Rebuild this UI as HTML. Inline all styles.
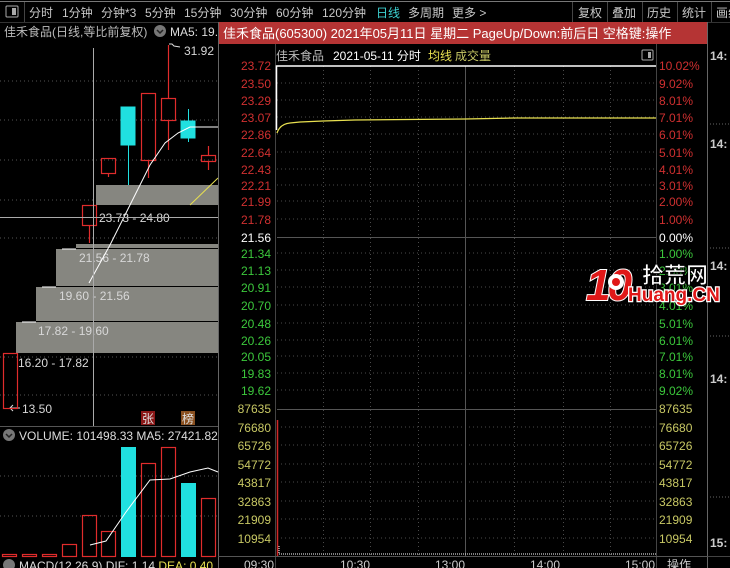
<!DOCTYPE html>
<html><head><meta charset="utf-8"><style>
html,body{margin:0;padding:0;background:#000;width:730px;height:568px;overflow:hidden}
svg{display:block}
text{font-family:"Liberation Sans","Noto Sans CJK SC",sans-serif;font-size:12px}
</style></head><body>
<svg width="730" height="568" viewBox="0 0 730 568" xmlns="http://www.w3.org/2000/svg">
<rect width="730" height="568" fill="#000"/>
<line x1="0" y1="1.5" x2="730" y2="1.5" stroke="#777"/>
<line x1="0" y1="22.5" x2="730" y2="22.5" stroke="#333"/>
<rect x="6" y="6" width="12" height="11" fill="none" stroke="#aaa" rx="1"/>
<rect x="12" y="8" width="4" height="7" fill="#aaa"/>
<line x1="24.5" y1="2" x2="24.5" y2="22" stroke="#444"/>
<g fill="#c8c8c8">
<text x="29" y="17">分时</text><text x="62" y="17">1分钟</text><text x="101" y="17">分钟*3</text>
<text x="145" y="17">5分钟</text><text x="184" y="17">15分钟</text><text x="230" y="17">30分钟</text>
<text x="276" y="17">60分钟</text><text x="322" y="17">120分钟</text>
<text x="376" y="17" fill="#3cd0d0">日线</text><text x="408" y="17">多周期</text><text x="452" y="17">更多 &gt;</text>
<text x="578" y="17">复权</text><text x="612" y="17">叠加</text><text x="647" y="17">历史</text><text x="682" y="17">统计</text><text x="716" y="17">画线</text>
</g>
<g stroke="#444"><line x1="572.5" y1="2" x2="572.5" y2="22"/><line x1="607.5" y1="2" x2="607.5" y2="22"/><line x1="642.5" y1="2" x2="642.5" y2="22"/><line x1="677.5" y1="2" x2="677.5" y2="22"/><line x1="711.5" y1="2" x2="711.5" y2="22"/></g>

<text x="4" y="36" fill="#bbb">佳禾食品(日线,等比前复权)</text>
<circle cx="160" cy="31" r="6" fill="#777"/><path d="M157 30l3 3 3-3" stroke="#222" stroke-width="1.5" fill="none"/>
<text x="170" y="36" fill="#ddd">MA5: 19.7</text>
<g stroke="#555" stroke-dasharray="1,3">
<line x1="0" y1="81" x2="218" y2="81"/><line x1="0" y1="120" x2="218" y2="120"/><line x1="0" y1="160" x2="218" y2="160"/>
<line x1="0" y1="200" x2="218" y2="200"/><line x1="0" y1="238" x2="218" y2="238"/><line x1="0" y1="357" x2="218" y2="357"/><line x1="0" y1="395" x2="218" y2="395"/>
<line x1="0" y1="476" x2="218" y2="476"/><line x1="0" y1="516" x2="218" y2="516"/>
</g>
<g fill="#868680">
<rect x="96" y="185" width="122" height="20"/>
<rect x="76" y="244" width="142" height="4"/>
<rect x="56" y="249" width="162" height="37"/>
<rect x="36" y="287" width="182" height="34"/>
<rect x="16" y="322" width="202" height="31"/>
</g>
<g stroke="#fff"><line x1="62" y1="249" x2="76" y2="249"/><line x1="42" y1="287" x2="56" y2="287"/><line x1="22" y1="322" x2="36" y2="322"/></g>
<line x1="190" y1="205" x2="218" y2="178" stroke="#e8e050"/>
<g fill="#d8d8d8">
<text x="99" y="222">23.73 - 24.80</text>
<text x="79" y="262">21.56 - 21.78</text>
<text x="59" y="300">19.60 - 21.56</text>
<text x="38" y="335">17.82 - 19.60</text>
<text x="18" y="367">16.20 - 17.82</text>
<text x="22" y="413">13.50</text>
<text x="184" y="55">31.92</text>
</g>
<path d="M10 408h10M13 405l-3 3 3 3" stroke="#ddd" fill="none"/>
<path d="M169 44l3 0 2 2 6 1" stroke="#ddd" fill="none"/>
<g fill="none" stroke="#e02c2c" stroke-width="1.2">
<rect x="3.5" y="353.5" width="14" height="55"/>
<rect x="82.5" y="205.5" width="14" height="20"/><line x1="89.5" y1="226" x2="89.5" y2="243"/>
<rect x="101.5" y="158.5" width="14" height="15"/><line x1="108.5" y1="174" x2="108.5" y2="177"/>
<rect x="141.5" y="93.5" width="14" height="67"/><line x1="148.5" y1="161" x2="148.5" y2="178"/>
<rect x="161.5" y="98.5" width="14" height="22"/><line x1="168.5" y1="45" x2="168.5" y2="98"/><line x1="168.5" y1="121" x2="168.5" y2="150"/>
<rect x="201.5" y="155.5" width="14" height="6"/><line x1="208.5" y1="146" x2="208.5" y2="155"/><line x1="208.5" y1="162" x2="208.5" y2="170"/>
</g>
<g fill="#20e0e0" stroke="#20e0e0">
<rect x="121" y="107" width="14" height="38"/><line x1="128.5" y1="145" x2="128.5" y2="185"/>
<rect x="181" y="121" width="14" height="17"/><line x1="188.5" y1="109" x2="188.5" y2="142"/>
</g>
<polyline points="89,283 110,245 130,205 150,165 165,143 178,133 190,127 218,127" fill="none" stroke="#fff"/>
<line x1="93.5" y1="48" x2="93.5" y2="427" stroke="#aaa"/>
<line x1="0" y1="217.5" x2="218" y2="217.5" stroke="#aaa"/>
<rect x="141" y="411" width="14" height="14" fill="#8a1818"/><text x="142" y="423" fill="#ddd">张</text>
<rect x="181" y="411" width="14" height="14" fill="#8a5020"/><text x="182" y="423" fill="#ddd">榜</text>
<line x1="0" y1="426.5" x2="218" y2="426.5" stroke="#555"/>
<circle cx="9" cy="435" r="6" fill="#777"/><path d="M6 434l3 3 3-3" stroke="#222" stroke-width="1.5" fill="none"/>
<text x="19" y="440" fill="#ddd">VOLUME: 101498.33  MA5: 27421.82</text>
<g fill="none" stroke="#e02c2c" stroke-width="1.2">
<rect x="2.5" y="554.5" width="14" height="2"/><rect x="22.5" y="554.5" width="14" height="2"/><rect x="42.5" y="554.5" width="14" height="2"/>
<rect x="62.5" y="544.5" width="14" height="12"/><rect x="82.5" y="515.5" width="14" height="41"/><rect x="101.5" y="531.5" width="14" height="25"/>
<rect x="141.5" y="463.5" width="14" height="93"/><rect x="161.5" y="447.5" width="14" height="109"/><rect x="201.5" y="498.5" width="14" height="58"/>
</g>
<rect x="121" y="447" width="15" height="110" fill="#20e0e0"/><rect x="181" y="483" width="15" height="74" fill="#20e0e0"/>
<polyline points="90,545 106,541 126,512 150,480 170,479 190,472 208,468 218,472" fill="none" stroke="#fff"/>
<circle cx="9" cy="565" r="6" fill="#777"/>
<text x="19" y="570" fill="#ddd">MACD(12,26,9)  DIF: 1.14  <tspan fill="#e8e050">DEA: 0.40</tspan></text>

<rect x="708" y="23" width="22" height="545" fill="#000"/>
<g fill="#ccc"><text x="710" y="60" style="font-weight:bold">14:</text><text x="710" y="148" style="font-weight:bold">14:</text><text x="710" y="270" style="font-weight:bold">14:</text><text x="710" y="383" style="font-weight:bold">14:</text><text x="710" y="547" style="font-weight:bold">15:</text></g>
<g stroke="#666" stroke-dasharray="1,2"><line x1="710" y1="124" x2="730" y2="124"/><line x1="710" y1="248" x2="730" y2="248"/><line x1="710" y1="336" x2="730" y2="336"/><line x1="710" y1="497" x2="730" y2="497"/></g>
<line x1="708" y1="556.5" x2="730" y2="556.5" stroke="#444"/>

<rect x="218" y="22" width="490" height="546" fill="#000"/>
<line x1="218.5" y1="22" x2="218.5" y2="568" stroke="#666"/>
<line x1="707.5" y1="22" x2="707.5" y2="568" stroke="#666"/>
<rect x="219" y="22" width="488" height="22" fill="#b53434"/>
<text x="223" y="38" fill="#fff" style="font-size:13px">佳禾食品(605300) 2021年05月11日 星期二 PageUp/Down:前后日 空格键:操作</text>
<text x="276" y="60" fill="#bbb">佳禾食品</text><text x="333" y="60" fill="#fff">2021-05-11 分时</text>
<text x="428" y="60" fill="#e8e050">均线</text><text x="455" y="60" fill="#c8c864">成交量</text>
<rect x="642" y="50" width="11" height="10" fill="none" stroke="#aaa" rx="1"/><rect x="648" y="52" width="3" height="6" fill="#aaa"/>
<line x1="656.5" y1="44" x2="656.5" y2="568" stroke="#444"/>
<g stroke="#4a4a4a" stroke-dasharray="1,3">
<line x1="277" y1="83" x2="656" y2="83"/><line x1="277" y1="100" x2="656" y2="100"/><line x1="277" y1="117" x2="656" y2="117"/><line x1="277" y1="134" x2="656" y2="134"/>
<line x1="277" y1="152" x2="656" y2="152"/><line x1="277" y1="169" x2="656" y2="169"/><line x1="277" y1="185" x2="656" y2="185"/><line x1="277" y1="201" x2="656" y2="201"/>
<line x1="277" y1="219" x2="656" y2="219"/><line x1="277" y1="253" x2="656" y2="253"/><line x1="277" y1="270" x2="656" y2="270"/>
<line x1="277" y1="287" x2="656" y2="287"/><line x1="277" y1="305" x2="656" y2="305"/><line x1="277" y1="323" x2="656" y2="323"/><line x1="277" y1="340" x2="656" y2="340"/>
<line x1="277" y1="356" x2="656" y2="356"/><line x1="277" y1="373" x2="656" y2="373"/><line x1="277" y1="390" x2="656" y2="390"/>
<line x1="277" y1="427" x2="656" y2="427"/><line x1="277" y1="445" x2="656" y2="445"/><line x1="277" y1="464" x2="656" y2="464"/><line x1="277" y1="482" x2="656" y2="482"/>
<line x1="277" y1="501" x2="656" y2="501"/><line x1="277" y1="519" x2="656" y2="519"/><line x1="277" y1="538" x2="656" y2="538"/>
<line x1="323.5" y1="66" x2="323.5" y2="556"/><line x1="370.5" y1="66" x2="370.5" y2="556"/><line x1="418.5" y1="66" x2="418.5" y2="556"/>
<line x1="514.5" y1="66" x2="514.5" y2="556"/><line x1="563.5" y1="66" x2="563.5" y2="556"/><line x1="610.5" y1="66" x2="610.5" y2="556"/>
</g>
<line x1="465.5" y1="66" x2="465.5" y2="556" stroke="#555"/>
<line x1="277" y1="237.5" x2="656" y2="237.5" stroke="#555"/>
<line x1="277" y1="409.5" x2="656" y2="409.5" stroke="#555"/>
<line x1="275.5" y1="44" x2="275.5" y2="568" stroke="#444"/>
<line x1="218" y1="556.5" x2="708" y2="556.5" stroke="#555"/>
<path d="M276.5 130V66H656" stroke="#fff" fill="none" stroke-width="1.5"/>
<path d="M277 133Q280 124 290 123L300 122L323 121L355 120L465 119L514 118L656 118" stroke="#e8e050" fill="none" stroke-width="1.3"/>
<line x1="277.5" y1="420" x2="277.5" y2="556" stroke="#d02828" stroke-width="1.5"/>
<path d="M279 546v8h377" stroke="#fff" stroke-dasharray="1,1" fill="none"/>
<g text-anchor="end">
<g fill="#d03030">
<text x="271" y="70">23.72</text><text x="271" y="88">23.50</text><text x="271" y="105">23.29</text><text x="271" y="122">23.07</text><text x="271" y="139">22.86</text>
<text x="271" y="157">22.64</text><text x="271" y="174">22.43</text><text x="271" y="190">22.21</text><text x="271" y="206">21.99</text><text x="271" y="224">21.78</text>
</g>
<text x="271" y="242" fill="#fff">21.56</text>
<g fill="#3cc83c">
<text x="271" y="258">21.34</text><text x="271" y="275">21.13</text><text x="271" y="292">20.91</text><text x="271" y="310">20.70</text><text x="271" y="328">20.48</text>
<text x="271" y="345">20.26</text><text x="271" y="361">20.05</text><text x="271" y="378">19.83</text><text x="271" y="395">19.62</text>
</g>
<g fill="#c8c864">
<text x="271" y="413">87635</text><text x="271" y="432">76680</text><text x="271" y="450">65726</text><text x="271" y="469">54772</text>
<text x="271" y="487">43817</text><text x="271" y="506">32863</text><text x="271" y="524">21909</text><text x="271" y="543">10954</text>
</g>
</g>
<g>
<g fill="#d03030">
<text x="659" y="70">10.02%</text><text x="659" y="88">9.02%</text><text x="659" y="105">8.01%</text><text x="659" y="122">7.01%</text><text x="659" y="139">6.01%</text>
<text x="659" y="157">5.01%</text><text x="659" y="174">4.01%</text><text x="659" y="190">3.01%</text><text x="659" y="206">2.00%</text><text x="659" y="224">1.00%</text>
</g>
<text x="659" y="242" fill="#fff">0.00%</text>
<g fill="#3cc83c">
<text x="659" y="258">1.00%</text><text x="659" y="275">2.00%</text><text x="659" y="292">3.01%</text><text x="659" y="310">4.01%</text><text x="659" y="328">5.01%</text>
<text x="659" y="345">6.01%</text><text x="659" y="361">7.01%</text><text x="659" y="378">8.01%</text><text x="659" y="395">9.02%</text>
</g>
<g fill="#c8c864">
<text x="659" y="413">87635</text><text x="659" y="432">76680</text><text x="659" y="450">65726</text><text x="659" y="469">54772</text>
<text x="659" y="487">43817</text><text x="659" y="506">32863</text><text x="659" y="524">21909</text><text x="659" y="543">10954</text>
</g>
</g>
<g fill="#ccc"><text x="244" y="569">09:30</text><text x="340" y="569">10:30</text><text x="435" y="569">13:00</text><text x="530" y="569">14:00</text><text x="625" y="569">15:00</text><text x="667" y="569">操作</text></g>
<text x="586" y="300" fill="#e01818" stroke="#fff" stroke-width="2" paint-order="stroke" style="font-size:44px;font-weight:bold;font-style:italic;letter-spacing:-3px">10</text>
<circle cx="616" cy="282" r="8" fill="#fff"/><circle cx="616" cy="282" r="4" fill="#e01818"/>
<text x="642" y="283" fill="#fff" stroke="#000" stroke-width="0.8" style="font-size:22px;font-weight:bold">拾荒网</text>
<text x="628" y="301" fill="#e01818" stroke="#fff" stroke-width="2.5" paint-order="stroke" style="font-size:19px;font-weight:bold">Huang.CN</text>
</svg>
</body></html>
